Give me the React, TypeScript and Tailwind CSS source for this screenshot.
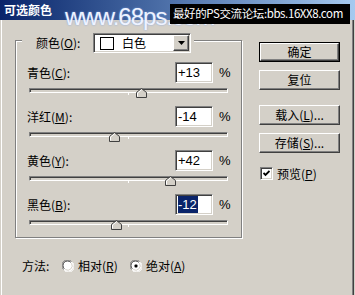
import React from 'react';

const sunken =
  'border border-t-[#808080] border-l-[#808080] border-b-white border-r-white shadow-[inset_1px_1px_0_#404040,inset_-1px_-1px_0_#d4d0c8]';
const raised =
  'border border-t-white border-l-white border-b-[#404040] border-r-[#404040] shadow-[inset_-1px_-1px_0_#808080]';

interface Row {
  label: string;
  hotkey: string;
  value: string;
  amount: number;
  selected?: boolean;
}

const rows: Row[] = [
  { label: '青色', hotkey: 'C', value: '+13', amount: 13 },
  { label: '洋红', hotkey: 'M', value: '-14', amount: -14 },
  { label: '黄色', hotkey: 'Y', value: '+42', amount: 42 },
  { label: '黑色', hotkey: 'B', value: '-12', amount: -12, selected: true },
];

const Thumb = () => (
  <svg width="11" height="10" viewBox="0 0 11 10">
    <path d="M0.5 9.5 V4.5 L5.5 0.5 L10.5 4.5 V9.5 Z" fill="#d4d0c8" stroke="#404040" />
    <path d="M1.5 8.5 V5 L5.5 1.8" fill="none" stroke="#fff" />
  </svg>
);

const Slider = ({ amount }: { amount: number }) => (
  <div className="relative ml-[13px] mt-[5px] h-[10px] w-[199px]">
    <div className={`mt-[3px] h-[5px] w-full ${sunken} bg-[#d4d0c8]`} />
    <div className="absolute left-[99px] top-[4px] h-[3px] w-px bg-white" />
    <div className="absolute top-0" style={{ left: 99.5 + amount * 0.995 - 5.5 }}>
      <Thumb />
    </div>
  </div>
);

const Radio = ({ checked }: { checked?: boolean }) => (
  <svg width="12" height="12" viewBox="0 0 12 12">
    <circle cx="6" cy="6" r="5.5" fill="#fff" />
    <path d="M1.5 9.5 A5.5 5.5 0 0 1 9.5 1.5" fill="none" stroke="#808080" />
    <path d="M2.3 8.7 A4.5 4.5 0 0 1 8.7 2.3" fill="none" stroke="#404040" />
    <path d="M10.5 2.5 A5.5 5.5 0 0 1 2.5 10.5" fill="none" stroke="#fff" />
    <path d="M9.5 3.3 A4.5 4.5 0 0 1 3.3 9.5" fill="none" stroke="#d4d0c8" />
    {checked && <rect x="4.5" y="4.5" width="3" height="3" rx="1" fill="#000" />}
  </svg>
);

const Button = ({ children, main }: { children: React.ReactNode; main?: boolean }) => (
  <div className={`h-[20px] w-[81px] ${main ? 'border border-black' : ''}`}>
    <div className={`flex h-full w-full items-center justify-center bg-[#d4d0c8] ${raised}`}>{children}</div>
  </div>
);

export default function App() {
  return (
    <div className="relative h-[295px] w-[355px] overflow-hidden bg-[#d4d0c8] font-['Noto_Sans_CJK_SC',sans-serif] text-[12px] leading-none text-black shadow-[inset_1px_0_0_#d4d0c8,inset_2px_0_0_#fff,inset_-1px_0_0_#d4d0c8,inset_-2px_0_0_#404040,inset_-3px_0_0_#808080]">
      {/* title bar */}
      <div className="flex h-[20px] items-center bg-gradient-to-r from-[#0a246a] to-[#a6caf0] pl-[4px] font-bold text-white">
        可选颜色
      </div>

      {/* watermark over the title; the black banner sits on top of its tail */}
      <div className="absolute left-[65px] top-[5px] whitespace-nowrap font-['Liberation_Sans',sans-serif] text-[24px] leading-none tracking-[-1px] text-[#eef3ff] [text-shadow:0_0_2px_#7fa0e0]">
        www.68ps.com
      </div>
      <div className="absolute left-[170px] top-[4px] flex h-[20px] w-[180px] items-center overflow-hidden whitespace-nowrap bg-black pl-[3px] text-[11.5px] tracking-[-0.4px] text-white">
        最好的PS交流论坛:bbs.16XX8.com
      </div>

      <div className="flex">
        {/* left column */}
        <div className="w-[242px]">
          <div className="ml-[15px] mt-[20px] h-[198px] w-[227px] border border-[#808080] shadow-[inset_1px_1px_0_#fff,1px_1px_0_#fff]">
            <div className="-mt-[8px] ml-[6px] flex h-[20px] w-fit items-center bg-[#d4d0c8] pl-[14px] pr-[3px]">
              <span className="w-[57px]">
                颜色(<u>O</u>):
              </span>
              <div className={`flex h-[20px] w-[98px] items-center bg-white ${sunken}`}>
                <div className="ml-[6px] h-[13px] w-[14px] border border-black bg-white" />
                <span className="ml-[8px] flex-1">白色</span>
                <div className={`mr-px flex h-[16px] w-[16px] items-center justify-center bg-[#d4d0c8] ${raised}`}>
                  <svg width="7" height="4" viewBox="0 0 7 4">
                    <path d="M0 0 H7 L3.5 4 Z" fill="#000" />
                  </svg>
                </div>
              </div>
            </div>

            {rows.map((r, i) => (
              <div key={r.hotkey} className={i === 0 ? 'mt-[9px]' : 'mt-[8px]'}>
                <div className="ml-[11px] flex h-[21px] items-center">
                  <span className="w-[148px]">
                    {r.label}(<u>{r.hotkey}</u>):
                  </span>
                  <div className={`flex h-[21px] w-[38px] items-center bg-white pl-[2px] font-['Liberation_Sans',sans-serif] text-[13px] ${sunken}`}>
                    {r.selected ? <span className="bg-[#0a246a] py-[2px] pr-px text-white">{r.value}</span> : r.value}
                  </div>
                  <span className="ml-[6px] font-['Liberation_Sans',sans-serif] text-[13px]">%</span>
                </div>
                <Slider amount={r.amount} />
              </div>
            ))}
          </div>

          <div className="ml-[22px] mt-[21px] flex h-[14px] items-center">
            <span className="w-[40px]">方法:</span>
            <Radio />
            <span className="ml-[4px] w-[48px]">
              相对(<u>R</u>)
            </span>
            <span className="ml-[4px]">
              <Radio checked />
            </span>
            <span className="ml-[4px]">
              绝对(<u>A</u>)
            </span>
          </div>
        </div>

        {/* right column */}
        <div className="ml-[17px] mt-[22px] flex flex-col">
          <Button main>确定</Button>
          <div className="mt-[8px]">
            <Button>复位</Button>
          </div>
          <div className="mt-[15px]">
            <Button>
              载入(<u>L</u>)...
            </Button>
          </div>
          <div className="mt-[8px]">
            <Button>
              存储(<u>S</u>)...
            </Button>
          </div>
          <div className="ml-px mt-[14px] flex items-center">
            <div className={`flex h-[13px] w-[13px] items-center justify-center bg-white ${sunken}`}>
              <svg width="7" height="7" viewBox="0 0 7 7">
                <path d="M0.5 3 L2.5 5 L6.5 1" fill="none" stroke="#000" strokeWidth="1.8" />
              </svg>
            </div>
            <span className="ml-[4px]">
              预览(<u>P</u>)
            </span>
          </div>
        </div>
      </div>
    </div>
  );
}
